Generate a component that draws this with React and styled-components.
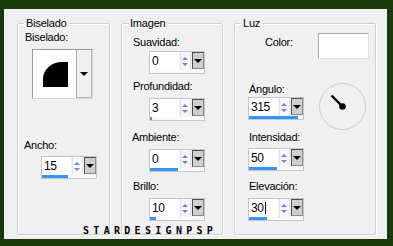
import React from "react";
import styled, { createGlobalStyle } from "styled-components";

const Global = createGlobalStyle`
  html, body { margin: 0; padding: 0; background: #173a0b; }
  body { font-family: "Liberation Sans", Arial, sans-serif; color: #000; }
`;

const Frame = styled.div`
  width: 393px;
  height: 246px;
  box-sizing: border-box;
  padding: 9px 6px 7px 4px;
  background: #173a0b;
`;

const Panel = styled.div`
  position: relative;
  height: 100%;
  box-sizing: border-box;
  background: #f0f0f0;
  display: flex;
  align-items: flex-start;
  gap: 11px;
  padding: 14px 0 0 13px;
`;

const Group = styled.div`
  position: relative;
  box-sizing: border-box;
  width: ${(p) => p.$w}px;
  height: 212px;
  border: 1px solid #d0d0d0;
  border-radius: 2px;
  box-shadow: inset 1px 1px 0 #fff, 1px 1px 0 #fff;
  display: flex;
  flex-direction: ${(p) => (p.$row ? "row" : "column")};
  align-items: flex-start;
`;

const Legend = styled.div`
  position: absolute;
  top: -7px;
  left: 6px;
  padding: 0 2px;
  background: #f0f0f0;
  font-size: 11px;
  line-height: 13px;
  letter-spacing: -0.2px;
`;

const Col = styled.div`
  display: flex;
  flex-direction: column;
  align-items: flex-start;
  margin-left: ${(p) => p.$ml || 0}px;
  width: ${(p) => (p.$w ? p.$w + "px" : "auto")};
`;

const Label = styled.div`
  font-size: 11px;
  line-height: 13px;
  letter-spacing: -0.25px;
  white-space: nowrap;
  margin-top: ${(p) => p.$mt || 0}px;
  margin-left: ${(p) => p.$ml || 0}px;
`;

/* ---- spin control ---- */
const SpinBox = styled.div`
  box-sizing: border-box;
  width: 56px;
  height: 23px;
  margin-top: ${(p) => p.$mt || 0}px;
  margin-left: ${(p) => p.$ml || 0}px;
  border: 1px solid #c6c6c6;
  background: #f3f3f3;
  display: flex;
  flex-direction: column;
`;

const SpinTop = styled.div`
  display: flex;
  height: 18px;
`;

const Edit = styled.div`
  box-sizing: border-box;
  width: 31px;
  height: 18px;
  background: #fff;
  padding-left: 2px;
  font-size: 12px;
  line-height: 17px;
  letter-spacing: -0.4px;
  display: flex;
  align-items: center;
`;

const Caret = styled.span`
  display: inline-block;
  width: 1px;
  height: 12px;
  background: #000;
  margin-left: 1px;
`;

const Arrows = styled.div`
  width: 10px;
  margin-left: 1px;
  display: flex;
  flex-direction: column;
  align-items: center;
  justify-content: center;
  gap: 3px;
  border-left: 1px solid #dfe3ee;
  border-right: 1px solid #dfe3ee;
  background: #f6f7fb;
`;

const Tri = styled.div`
  width: 0;
  height: 0;
  border-left: 3px solid transparent;
  border-right: 3px solid transparent;
  ${(p) =>
    p.$up
      ? "border-bottom: 3px solid #7386d2;"
      : "border-top: 3px solid #7386d2;"}
`;

const DropBtn = styled.div`
  box-sizing: border-box;
  width: 13px;
  height: 17px;
  margin-left: 1px;
  border: 1px solid #505050;
  border-right-color: #8a8a8a;
  border-bottom-color: #8a8a8a;
  background: #cfcfcf;
  display: flex;
  align-items: center;
  justify-content: center;
`;

const BlackTri = styled.div`
  width: 0;
  height: 0;
  border-left: 4px solid transparent;
  border-right: 4px solid transparent;
  border-top: 4px solid #000;
`;

const Track = styled.div`
  height: 4px;
  background: #fafafa;
`;

const Fill = styled.div`
  height: 100%;
  background: #3396f2;
`;

function Spin({ value, bar, caret, mt, ml }) {
  return (
    <SpinBox $mt={mt} $ml={ml}>
      <SpinTop>
        <Edit>
          {value}
          {caret && <Caret />}
        </Edit>
        <Arrows>
          <Tri $up />
          <Tri />
        </Arrows>
        <DropBtn>
          <BlackTri />
        </DropBtn>
      </SpinTop>
      <Track>
        <Fill style={{ width: bar + "px" }} />
      </Track>
    </SpinBox>
  );
}

/* ---- picture dropdown ---- */
const PicDrop = styled.div`
  box-sizing: border-box;
  width: 61px;
  height: 50px;
  margin-top: ${(p) => p.$mt}px;
  margin-left: ${(p) => p.$ml}px;
  display: flex;
  border: 1px solid #9a9a9a;
  border-right-color: #d8d8d8;
  border-bottom-color: #d8d8d8;
  background: #fff;
`;

const PicArea = styled.div`
  width: 43px;
  height: 100%;
`;

const PicBtn = styled.div`
  flex: 1;
  background: #f0f0f0;
  border-left: 1px solid #a8a8a8;
  border-right: 1px solid #b8b8b8;
  border-bottom: 1px solid #b8b8b8;
  display: flex;
  align-items: center;
  justify-content: center;
`;

/* ---- luz ---- */
const Swatch = styled.div`
  box-sizing: border-box;
  width: 51px;
  height: 26px;
  margin-top: 9px;
  background: #fff;
  border: 1px solid #a8a8a8;
  border-right-color: #e2e2e2;
  border-bottom-color: #e2e2e2;
`;

const Dial = styled.svg`
  display: block;
  margin-top: 24px;
  margin-left: 1px;
`;

const Watermark = styled.div`
  position: absolute;
  left: 79px;
  top: 217px;
  font-family: "DejaVu Sans Mono", "Liberation Mono", monospace;
  font-weight: bold;
  font-size: 10px;
  line-height: 10px;
  letter-spacing: 4.3px;
  color: #000;
`;

export default function App() {
  return (
    <Frame>
      <Global />
      <Panel>
        <Group $w={93}>
          <Legend>Biselado</Legend>
          <Label $mt={7} $ml={7}>Biselado:</Label>
          <PicDrop $mt={5} $ml={14}>
            <PicArea>
              <svg width="43" height="48" viewBox="0 0 43 48">
                <path d="M10 37 L10 29 A19 17 0 0 1 29 12 L35 12 L35 37 Z" fill="#000" />
              </svg>
            </PicArea>
            <PicBtn>
              <BlackTri />
            </PicBtn>
          </PicDrop>
          <Label $mt={40} $ml={6}>Ancho:</Label>
          <Spin value="15" bar={26} mt={4} ml={23} />
        </Group>

        <Group $w={102}>
          <Legend>Imagen</Legend>
          <Label $mt={12} $ml={11}>Suavidad:</Label>
          <Spin value="0" bar={0} mt={2} ml={27} />
          <Label $mt={6} $ml={11}>Profundidad:</Label>
          <Spin value="3" bar={2} mt={5} ml={27} />
          <Label $mt={10} $ml={10}>Ambiente:</Label>
          <Spin value="0" bar={28} mt={5} ml={27} />
          <Label $mt={8} $ml={11}>Brillo:</Label>
          <Spin value="10" bar={6} mt={5} ml={27} />
        </Group>

        <Group $w={142} $row>
          <Legend>Luz</Legend>
          <Col $ml={13} $w={56}>
            <Label $mt={12} $ml={17}>Color:</Label>
            <Label $mt={34} $ml={1}>Ángulo:</Label>
            <Spin value="315" bar={49} mt={1} />
            <Label $mt={11} $ml={1}>Intensidad:</Label>
            <Spin value="50" bar={28} mt={4} />
            <Label $mt={9} $ml={1}>Elevación:</Label>
            <Spin value="30" bar={18} caret mt={5} />
          </Col>
          <Col $ml={14}>
            <Swatch />
            <Dial width="48" height="48" viewBox="0 0 48 48">
              <circle cx="23.5" cy="23.5" r="23" fill="none" stroke="#cdcdcd" strokeWidth="1" />
              <line x1="12.5" y1="12.5" x2="23.5" y2="23.5" stroke="#000" strokeWidth="2.4" />
              <circle cx="23.5" cy="23.5" r="3.3" fill="#000" />
            </Dial>
          </Col>
        </Group>
        <Watermark>STARDESIGNPSP</Watermark>
      </Panel>
    </Frame>
  );
}
